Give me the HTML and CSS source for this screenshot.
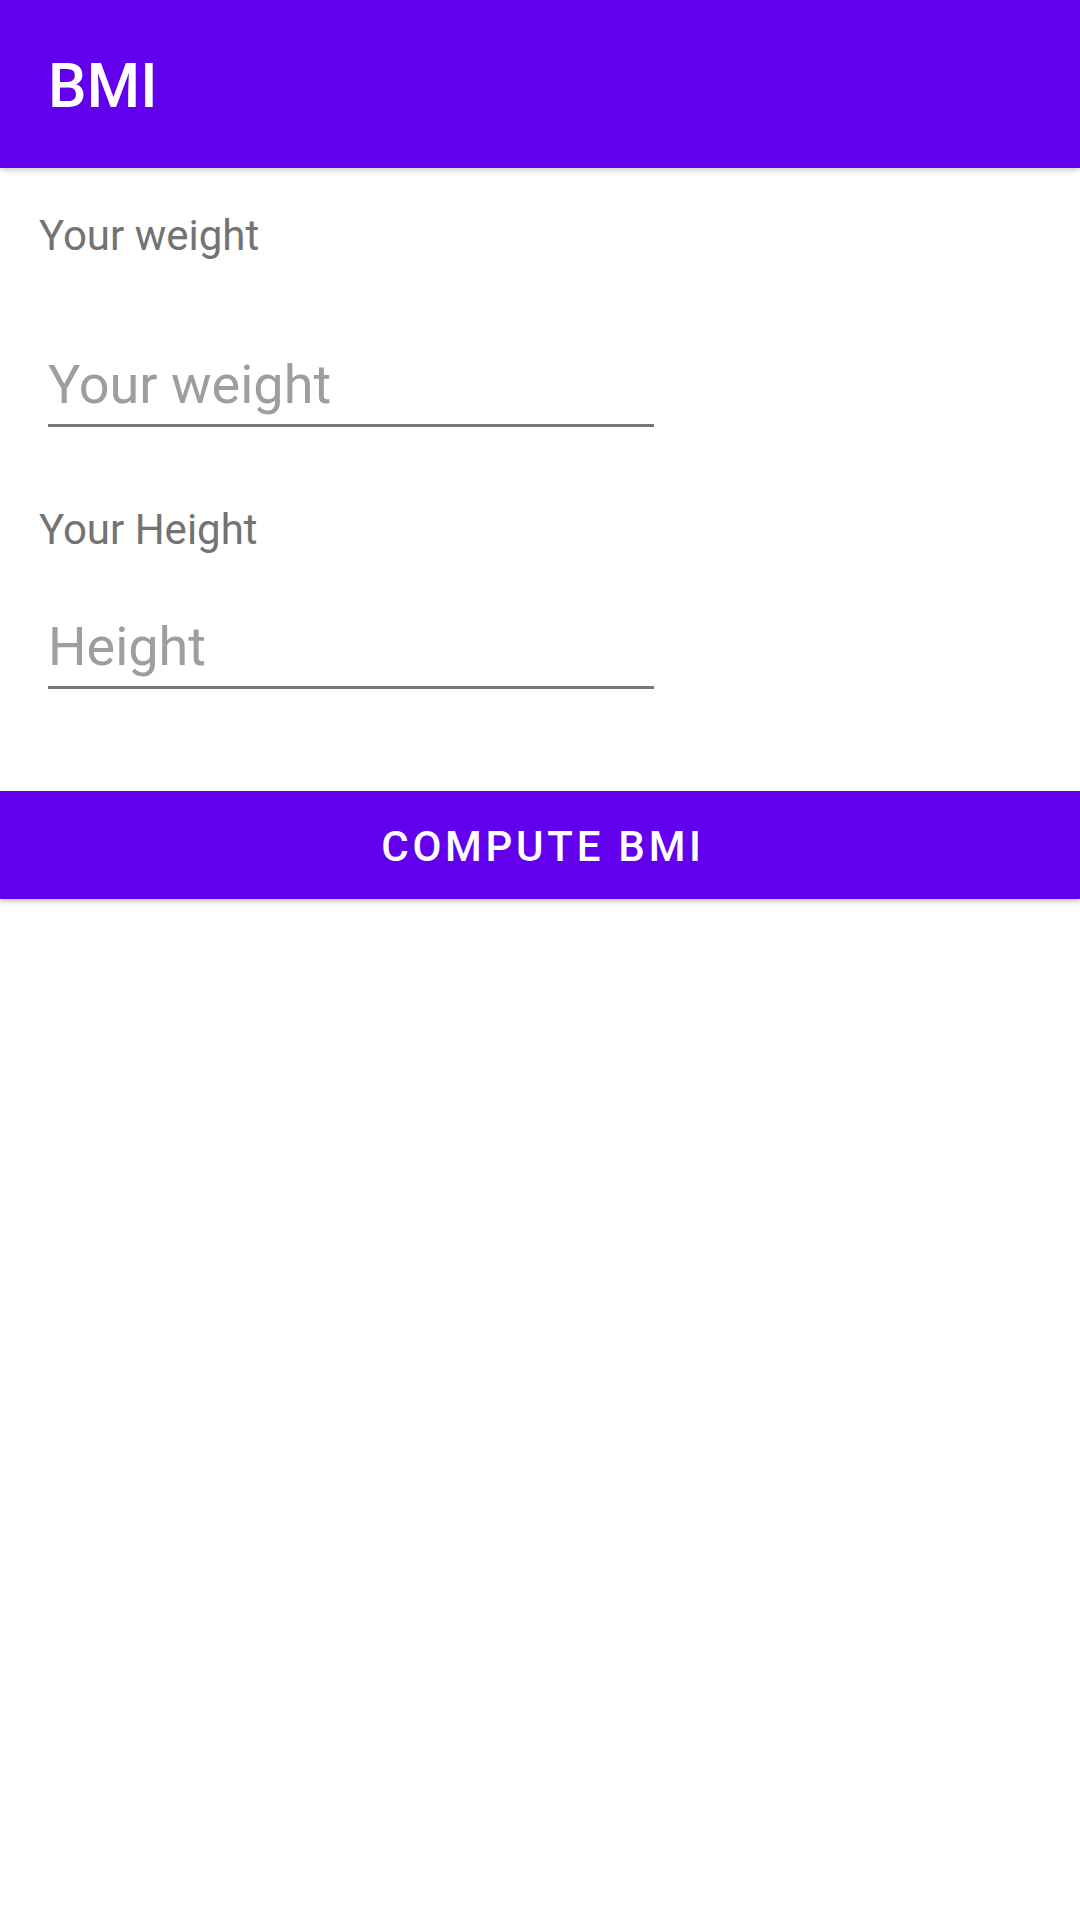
FILE: index.html
```html
<!DOCTYPE html>
<html lang="en">
<head>
<meta charset="utf-8">
<title>BMI</title>
<link rel="stylesheet" href="styles.css">
</head>
<body>
<header class="app-bar">
  <h1 class="app-title">BMI</h1>
</header>
<main class="content">
  <label class="field-label label-weight" for="weight">Your weight</label>
  <input class="field-input input-weight" id="weight" type="text" placeholder="Your weight">
  <label class="field-label label-height" for="height">Your Height</label>
  <input class="field-input input-height" id="height" type="text" placeholder="Height">
  <button class="compute-btn" type="button">COMPUTE BMI</button>
</main>
</body>
</html>
```
FILE: styles.css
```css
html, body {
  margin: 0;
  padding: 0;
  background: #ffffff;
}
body {
  width: 1080px;
  min-height: 1920px;
  font-family: Roboto, "Liberation Sans", sans-serif;
  display: flex;
  flex-direction: column;
}
.app-bar {
  height: 168px;
  box-sizing: border-box;
  background: #6200ee;
  display: flex;
  align-items: center;
  padding-left: 48px;
  padding-top: 4px;
  box-shadow: 0 2px 6px rgba(0, 0, 0, 0.22);
  position: relative;
  z-index: 1;
}
.app-title {
  margin: 0;
  color: #ffffff;
  font-size: 61px;
  font-weight: 500;
  line-height: normal;
  letter-spacing: 0.2px;
}
.content {
  display: flex;
  flex-direction: column;
  align-items: flex-start;
}
.field-label {
  font-size: 42px;
  line-height: normal;
  color: #737373;
  margin-left: 39px;
}
.label-weight {
  margin-top: 43px;
}
.label-height {
  margin-top: 78px;
}
.field-input {
  box-sizing: content-box;
  width: 606px;
  height: 63px;
  margin: 0 0 0 48px;
  padding: 0 0 8px 0;
  border: none;
  border-bottom: 3px solid #777777;
  outline: none;
  background: transparent;
  font-family: Roboto, "Liberation Sans", sans-serif;
  font-size: 54px;
  line-height: normal;
  color: #212121;
}
.field-input::placeholder {
  color: #9e9e9e;
  opacity: 1;
}
.input-weight {
  margin-top: 93px;
}
.input-height {
  margin-top: 61px;
}
.compute-btn {
  margin-top: 102px;
  align-self: stretch;
  height: 108px;
  padding: 3px 0 0 6px;
  border: none;
  background: #6200ee;
  color: #ffffff;
  font-family: Roboto, "Liberation Sans", sans-serif;
  font-size: 42px;
  font-weight: 500;
  letter-spacing: 3.75px;
  box-shadow: 0 3px 4px rgba(0, 0, 0, 0.2);
}
```
